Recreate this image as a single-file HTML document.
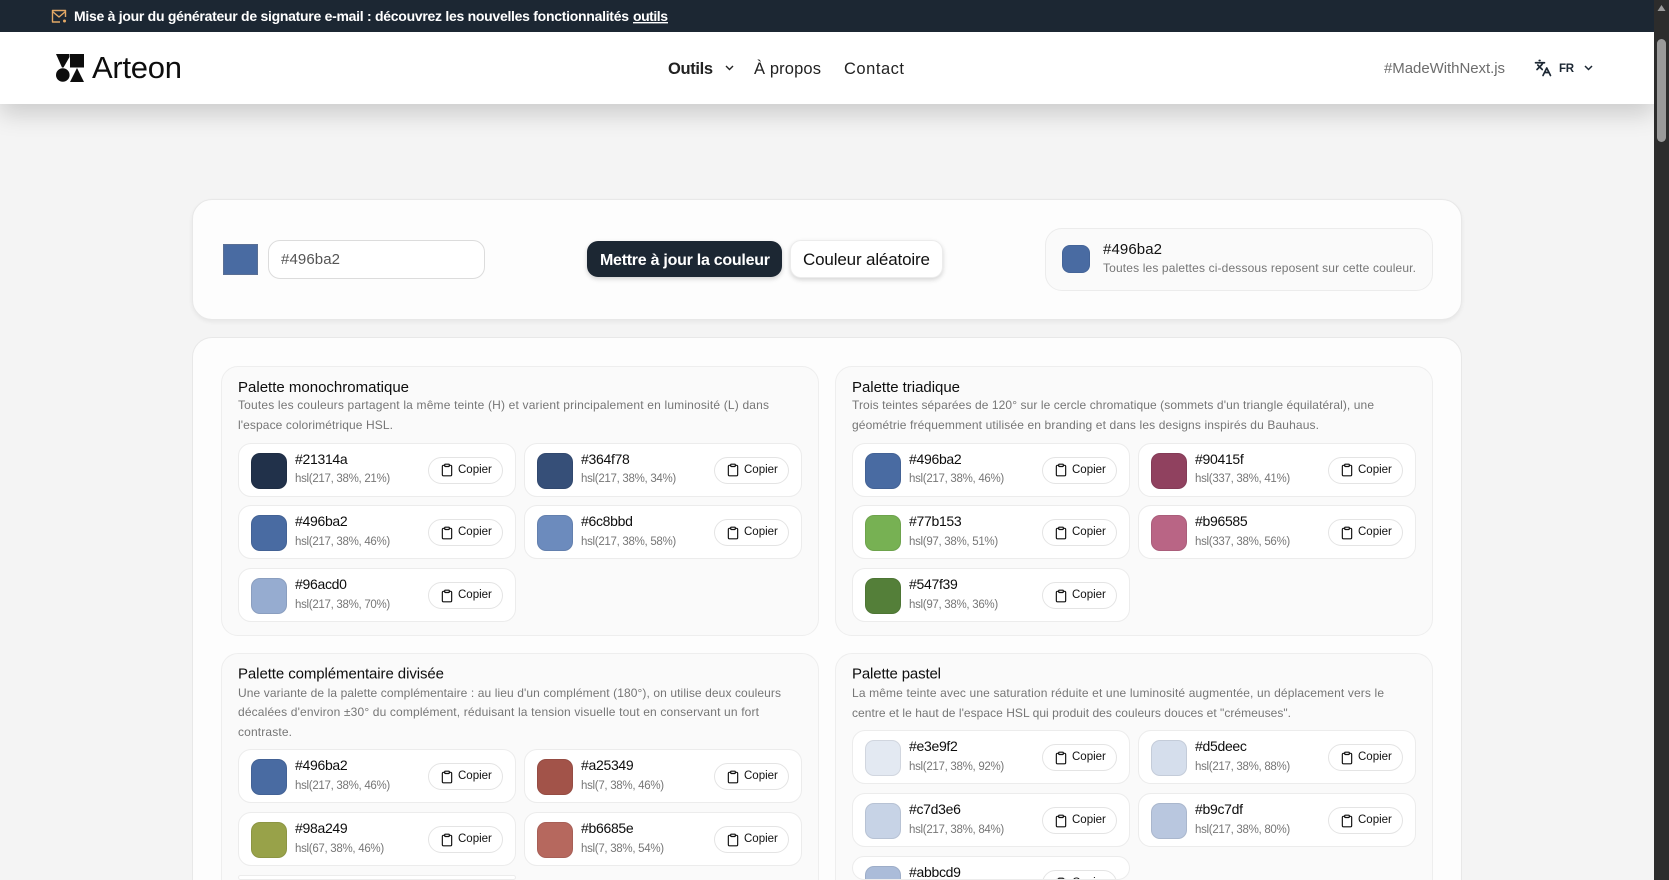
<!DOCTYPE html>
<html lang="fr"><head><meta charset="utf-8"><title>Arteon</title>
<style>
*{box-sizing:border-box;margin:0;padding:0}
html,body{width:1669px;height:880px;overflow:hidden;background:#f4f4f4;font-family:"Liberation Sans",sans-serif;color:#0d0d0d}
#w{position:relative;width:1669px;height:880px;overflow:hidden;background:#f4f4f4}
.a{position:absolute}
#banner{left:0;top:0;width:1654px;height:32px;background:#1c2733}
#nav{left:0;top:32px;width:1654px;height:72px;background:#fff;box-shadow:0 10px 24px rgba(0,0,0,.17)}
#bar{left:1654px;top:0;width:15px;height:880px;background:#2c2c2c}
#thumb{left:1657px;top:39px;width:9px;height:103px;background:#9a9a9a;border-radius:5px}
.card{background:#fdfdfd;border:1px solid #e8e8e8;border-radius:20px;box-shadow:0 2px 4px rgba(0,0,0,.06)}
.col{background:#fafafa;border:1px solid #eeeeee;border-radius:17px}
.open{border-bottom:0;border-bottom-left-radius:0;border-bottom-right-radius:0;box-shadow:none}
.it{position:absolute;width:278px;height:54px;background:#fff;border:1px solid #ececec;border-radius:13px;overflow:hidden}
.it i{position:absolute;left:12px;top:9px;width:36px;height:36px;border-radius:9px;border:1px solid rgba(0,0,0,.08)}
.it b{position:absolute;left:56px;top:7px;font-weight:400;font-size:14px;line-height:17px;letter-spacing:-.3px;color:#0d0d0d;white-space:nowrap}
.it span{position:absolute;left:56px;top:28.500px;font-size:11.5px;line-height:15px;letter-spacing:-.3px;color:#777;white-space:nowrap}
.it em{position:absolute;left:189px;top:13px;width:75px;height:27px;border:1px solid #e4e4e4;border-radius:14px;background:#fff;font-style:normal;font-size:11.5px;line-height:25.500px;padding-left:29px;color:#111}
.it em svg{position:absolute;left:11px;top:5.500px;width:14px;height:14px;fill:none;stroke:#111;stroke-width:2;stroke-linecap:round;stroke-linejoin:round}
#t{left:0;top:0;width:1669px;height:880px;pointer-events:none}
#t text{font-family:"Liberation Sans",sans-serif}
.ti{font-size:15px;fill:#0d0d0d}
.de{font-size:12px;fill:#767676}
.na{font-size:16.500px;fill:#222}
</style></head><body><div id="w">
<div class="a card" style="left:192px;top:199px;width:1270px;height:121px"></div>
<div class="a card open" style="left:192px;top:337px;width:1270px;height:543px"></div>

<div class="a" style="left:223px;top:244px;width:35px;height:31px;background:#496ba2;border:1px solid #5a6f94"></div>
<div class="a" style="left:268px;top:240px;width:217px;height:39px;background:#fff;border:1px solid #dcdcdc;border-radius:12px"></div>
<div class="a" style="left:587px;top:241px;width:195px;height:36px;background:#1c2733;border-radius:11px;box-shadow:0 2px 5px rgba(0,0,0,.18)"></div>
<div class="a" style="left:790px;top:240px;width:153px;height:38px;background:#fff;border:1px solid #ececec;border-radius:11px;box-shadow:0 2px 5px rgba(0,0,0,.16)"></div>
<div class="a" style="left:1045px;top:228px;width:388px;height:63px;background:#fafafa;border:1px solid #ececec;border-radius:17px"></div>
<div class="a" style="left:1062px;top:245px;width:28px;height:28px;background:#496ba2;border-radius:8px;border:1px solid rgba(0,0,0,.06)"></div>

<div class="a col" style="left:221px;top:366px;width:598px;height:270px"></div>
<div class="a col" style="left:835px;top:366px;width:598px;height:270px"></div>
<div class="a col open" style="left:221px;top:652.500px;width:598px;height:227.500px"></div>
<div class="a col open" style="left:835px;top:652.500px;width:598px;height:227.500px"></div>

<div class="it" style="left:238px;top:442.700px"><i style="background:#21314a"></i><b>#21314a</b><span>hsl(217, 38%, 21%)</span><em><svg viewBox="0 0 24 24"><rect x="8" y="2" width="8" height="4" rx="1"/><path d="M16 4h2a2 2 0 0 1 2 2v14a2 2 0 0 1-2 2H6a2 2 0 0 1-2-2V6a2 2 0 0 1 2-2h2"/></svg>Copier</em></div>
<div class="it" style="left:524px;top:442.700px"><i style="background:#364f78"></i><b>#364f78</b><span>hsl(217, 38%, 34%)</span><em><svg viewBox="0 0 24 24"><rect x="8" y="2" width="8" height="4" rx="1"/><path d="M16 4h2a2 2 0 0 1 2 2v14a2 2 0 0 1-2 2H6a2 2 0 0 1-2-2V6a2 2 0 0 1 2-2h2"/></svg>Copier</em></div>
<div class="it" style="left:238px;top:505.400px"><i style="background:#496ba2"></i><b>#496ba2</b><span>hsl(217, 38%, 46%)</span><em><svg viewBox="0 0 24 24"><rect x="8" y="2" width="8" height="4" rx="1"/><path d="M16 4h2a2 2 0 0 1 2 2v14a2 2 0 0 1-2 2H6a2 2 0 0 1-2-2V6a2 2 0 0 1 2-2h2"/></svg>Copier</em></div>
<div class="it" style="left:524px;top:505.400px"><i style="background:#6c8bbd"></i><b>#6c8bbd</b><span>hsl(217, 38%, 58%)</span><em><svg viewBox="0 0 24 24"><rect x="8" y="2" width="8" height="4" rx="1"/><path d="M16 4h2a2 2 0 0 1 2 2v14a2 2 0 0 1-2 2H6a2 2 0 0 1-2-2V6a2 2 0 0 1 2-2h2"/></svg>Copier</em></div>
<div class="it" style="left:238px;top:568.200px"><i style="background:#96acd0"></i><b>#96acd0</b><span>hsl(217, 38%, 70%)</span><em><svg viewBox="0 0 24 24"><rect x="8" y="2" width="8" height="4" rx="1"/><path d="M16 4h2a2 2 0 0 1 2 2v14a2 2 0 0 1-2 2H6a2 2 0 0 1-2-2V6a2 2 0 0 1 2-2h2"/></svg>Copier</em></div>

<div class="it" style="left:852px;top:442.700px"><i style="background:#496ba2"></i><b>#496ba2</b><span>hsl(217, 38%, 46%)</span><em><svg viewBox="0 0 24 24"><rect x="8" y="2" width="8" height="4" rx="1"/><path d="M16 4h2a2 2 0 0 1 2 2v14a2 2 0 0 1-2 2H6a2 2 0 0 1-2-2V6a2 2 0 0 1 2-2h2"/></svg>Copier</em></div>
<div class="it" style="left:1138px;top:442.700px"><i style="background:#90415f"></i><b>#90415f</b><span>hsl(337, 38%, 41%)</span><em><svg viewBox="0 0 24 24"><rect x="8" y="2" width="8" height="4" rx="1"/><path d="M16 4h2a2 2 0 0 1 2 2v14a2 2 0 0 1-2 2H6a2 2 0 0 1-2-2V6a2 2 0 0 1 2-2h2"/></svg>Copier</em></div>
<div class="it" style="left:852px;top:505.400px"><i style="background:#77b153"></i><b>#77b153</b><span>hsl(97, 38%, 51%)</span><em><svg viewBox="0 0 24 24"><rect x="8" y="2" width="8" height="4" rx="1"/><path d="M16 4h2a2 2 0 0 1 2 2v14a2 2 0 0 1-2 2H6a2 2 0 0 1-2-2V6a2 2 0 0 1 2-2h2"/></svg>Copier</em></div>
<div class="it" style="left:1138px;top:505.400px"><i style="background:#b96585"></i><b>#b96585</b><span>hsl(337, 38%, 56%)</span><em><svg viewBox="0 0 24 24"><rect x="8" y="2" width="8" height="4" rx="1"/><path d="M16 4h2a2 2 0 0 1 2 2v14a2 2 0 0 1-2 2H6a2 2 0 0 1-2-2V6a2 2 0 0 1 2-2h2"/></svg>Copier</em></div>
<div class="it" style="left:852px;top:568.200px"><i style="background:#547f39"></i><b>#547f39</b><span>hsl(97, 38%, 36%)</span><em><svg viewBox="0 0 24 24"><rect x="8" y="2" width="8" height="4" rx="1"/><path d="M16 4h2a2 2 0 0 1 2 2v14a2 2 0 0 1-2 2H6a2 2 0 0 1-2-2V6a2 2 0 0 1 2-2h2"/></svg>Copier</em></div>

<div class="it" style="left:238px;top:749.400px"><i style="background:#496ba2"></i><b>#496ba2</b><span>hsl(217, 38%, 46%)</span><em><svg viewBox="0 0 24 24"><rect x="8" y="2" width="8" height="4" rx="1"/><path d="M16 4h2a2 2 0 0 1 2 2v14a2 2 0 0 1-2 2H6a2 2 0 0 1-2-2V6a2 2 0 0 1 2-2h2"/></svg>Copier</em></div>
<div class="it" style="left:524px;top:749.400px"><i style="background:#a25349"></i><b>#a25349</b><span>hsl(7, 38%, 46%)</span><em><svg viewBox="0 0 24 24"><rect x="8" y="2" width="8" height="4" rx="1"/><path d="M16 4h2a2 2 0 0 1 2 2v14a2 2 0 0 1-2 2H6a2 2 0 0 1-2-2V6a2 2 0 0 1 2-2h2"/></svg>Copier</em></div>
<div class="it" style="left:238px;top:812.300px"><i style="background:#98a249"></i><b>#98a249</b><span>hsl(67, 38%, 46%)</span><em><svg viewBox="0 0 24 24"><rect x="8" y="2" width="8" height="4" rx="1"/><path d="M16 4h2a2 2 0 0 1 2 2v14a2 2 0 0 1-2 2H6a2 2 0 0 1-2-2V6a2 2 0 0 1 2-2h2"/></svg>Copier</em></div>
<div class="it" style="left:524px;top:812.300px"><i style="background:#b6685e"></i><b>#b6685e</b><span>hsl(7, 38%, 54%)</span><em><svg viewBox="0 0 24 24"><rect x="8" y="2" width="8" height="4" rx="1"/><path d="M16 4h2a2 2 0 0 1 2 2v14a2 2 0 0 1-2 2H6a2 2 0 0 1-2-2V6a2 2 0 0 1 2-2h2"/></svg>Copier</em></div>
<div class="it open" style="left:238px;top:875px;height:5px"></div>

<div class="it" style="left:852px;top:730.300px"><i style="background:#e3e9f2"></i><b>#e3e9f2</b><span>hsl(217, 38%, 92%)</span><em><svg viewBox="0 0 24 24"><rect x="8" y="2" width="8" height="4" rx="1"/><path d="M16 4h2a2 2 0 0 1 2 2v14a2 2 0 0 1-2 2H6a2 2 0 0 1-2-2V6a2 2 0 0 1 2-2h2"/></svg>Copier</em></div>
<div class="it" style="left:1138px;top:730.300px"><i style="background:#d5deec"></i><b>#d5deec</b><span>hsl(217, 38%, 88%)</span><em><svg viewBox="0 0 24 24"><rect x="8" y="2" width="8" height="4" rx="1"/><path d="M16 4h2a2 2 0 0 1 2 2v14a2 2 0 0 1-2 2H6a2 2 0 0 1-2-2V6a2 2 0 0 1 2-2h2"/></svg>Copier</em></div>
<div class="it" style="left:852px;top:793.300px"><i style="background:#c7d3e6"></i><b>#c7d3e6</b><span>hsl(217, 38%, 84%)</span><em><svg viewBox="0 0 24 24"><rect x="8" y="2" width="8" height="4" rx="1"/><path d="M16 4h2a2 2 0 0 1 2 2v14a2 2 0 0 1-2 2H6a2 2 0 0 1-2-2V6a2 2 0 0 1 2-2h2"/></svg>Copier</em></div>
<div class="it" style="left:1138px;top:793.300px"><i style="background:#b9c7df"></i><b>#b9c7df</b><span>hsl(217, 38%, 80%)</span><em><svg viewBox="0 0 24 24"><rect x="8" y="2" width="8" height="4" rx="1"/><path d="M16 4h2a2 2 0 0 1 2 2v14a2 2 0 0 1-2 2H6a2 2 0 0 1-2-2V6a2 2 0 0 1 2-2h2"/></svg>Copier</em></div>
<div class="it open" style="left:852px;top:856.300px;height:23.700px"><i style="background:#abbcd9"></i><b>#abbcd9</b><em><svg viewBox="0 0 24 24"><rect x="8" y="2" width="8" height="4" rx="1"/><path d="M16 4h2a2 2 0 0 1 2 2v14a2 2 0 0 1-2 2H6a2 2 0 0 1-2-2V6a2 2 0 0 1 2-2h2"/></svg>Copier</em></div>

<div class="a" id="nav"></div>
<div class="a" id="banner"></div>
<div class="a" id="bar"></div>
<div class="a" id="thumb"></div>
<svg class="a" style="left:1657px;top:4px" width="9" height="8"><path d="M4.5 1L8.5 7H.5z" fill="#9a9a9a"/></svg>

<svg class="a" style="left:51px;top:9px" width="17" height="15" viewBox="0 0 17 15" fill="none" stroke="#e2a866" stroke-width="1.4" stroke-linejoin="round"><path d="M9 13H1.5V1.5h13V8"/><path d="M1.5 2.5L8 8l6.500-5.500"/><circle cx="13.500" cy="12" r="1.500" fill="#e2a866" stroke="none"/></svg>

<svg class="a" style="left:56px;top:54px" width="28" height="28" viewBox="0 0 28 28" fill="#0d0d0d"><path d="M0 0h13.500v3L7.500 13.500h-1.500z"/><rect x="14" y="0" width="14" height="13.500"/><circle cx="6.800" cy="21" r="6.800"/><path d="M21 14l7 14H14z"/></svg>

<svg class="a" style="left:725px;top:65px" width="9" height="6" fill="none" stroke="#222" stroke-width="1.400"><path d="M1 1l3.500 3.500L8 1"/></svg>
<svg class="a" style="left:1534px;top:59px" width="18" height="18" viewBox="0 0 24 24" fill="none" stroke="#1c2733" stroke-width="2.200" stroke-linecap="round" stroke-linejoin="round"><path d="M5 8l6 6M4 14l6-6 2-3M2 5h12M7 2h1M22 22l-5-10-5 10M14 18h6"/></svg>
<svg class="a" style="left:1584px;top:65px" width="9" height="6" fill="none" stroke="#1c2733" stroke-width="1.500"><path d="M1 1l3.500 3.500L8 1"/></svg>

<svg class="a" id="t" width="1669" height="880">
<text x="74" y="21" font-size="14" font-weight="700" fill="#fff" textLength="555">Mise à jour du générateur de signature e-mail : découvrez les nouvelles fonctionnalités</text>
<text x="633" y="21" font-size="14" font-weight="700" fill="#fff" textLength="35" text-decoration="underline">outils</text>
<text x="92" y="78" font-size="31" fill="#0d0d0d" textLength="90">Arteon</text>
<text x="668" y="74" class="na" font-weight="700" textLength="45">Outils</text>
<text x="754" y="74" class="na" textLength="67">À propos</text>
<text x="844" y="74" class="na" textLength="60">Contact</text>
<text x="1384" y="73" font-size="15" fill="#6d6d6d" textLength="121">#MadeWithNext.js</text>
<text x="1559" y="72" font-size="11.500" font-weight="700" fill="#1c2733" textLength="15">FR</text>

<text x="281" y="264" font-size="15" fill="#555" textLength="59">#496ba2</text>
<text x="600" y="265" font-size="16" font-weight="700" fill="#fff" textLength="170">Mettre à jour la couleur</text>
<text x="803" y="265" font-size="17" fill="#111" textLength="127">Couleur aléatoire</text>
<text x="1103" y="254" font-size="15" fill="#111" textLength="59">#496ba2</text>
<text x="1103" y="272" class="de" textLength="313">Toutes les palettes ci-dessous reposent sur cette couleur.</text>

<text x="238" y="392" class="ti" textLength="171">Palette monochromatique</text>
<text x="238" y="409" class="de" textLength="531">Toutes les couleurs partagent la même teinte (H) et varient principalement en luminosité (L) dans</text>
<text x="238" y="429" class="de" textLength="155">l'espace colorimétrique HSL.</text>

<text x="852" y="392" class="ti" textLength="108">Palette triadique</text>
<text x="852" y="409" class="de" textLength="522">Trois teintes séparées de 120° sur le cercle chromatique (sommets d'un triangle équilatéral), une</text>
<text x="852" y="429" class="de" textLength="467">géométrie fréquemment utilisée en branding et dans les designs inspirés du Bauhaus.</text>

<text x="238" y="678.500" class="ti" textLength="206">Palette complémentaire divisée</text>
<text x="238" y="697" class="de" textLength="543">Une variante de la palette complémentaire : au lieu d'un complément (180°), on utilise deux couleurs</text>
<text x="238" y="716" class="de" textLength="521">décalées d'environ ±30° du complément, réduisant la tension visuelle tout en conservant un fort</text>
<text x="238" y="736" class="de" textLength="54">contraste.</text>

<text x="852" y="678.500" class="ti" textLength="89">Palette pastel</text>
<text x="852" y="697" class="de" textLength="532">La même teinte avec une saturation réduite et une luminosité augmentée, un déplacement vers le</text>
<text x="852" y="717" class="de" textLength="439">centre et le haut de l'espace HSL qui produit des couleurs douces et "crémeuses".</text>
</svg>
</div></body></html>
